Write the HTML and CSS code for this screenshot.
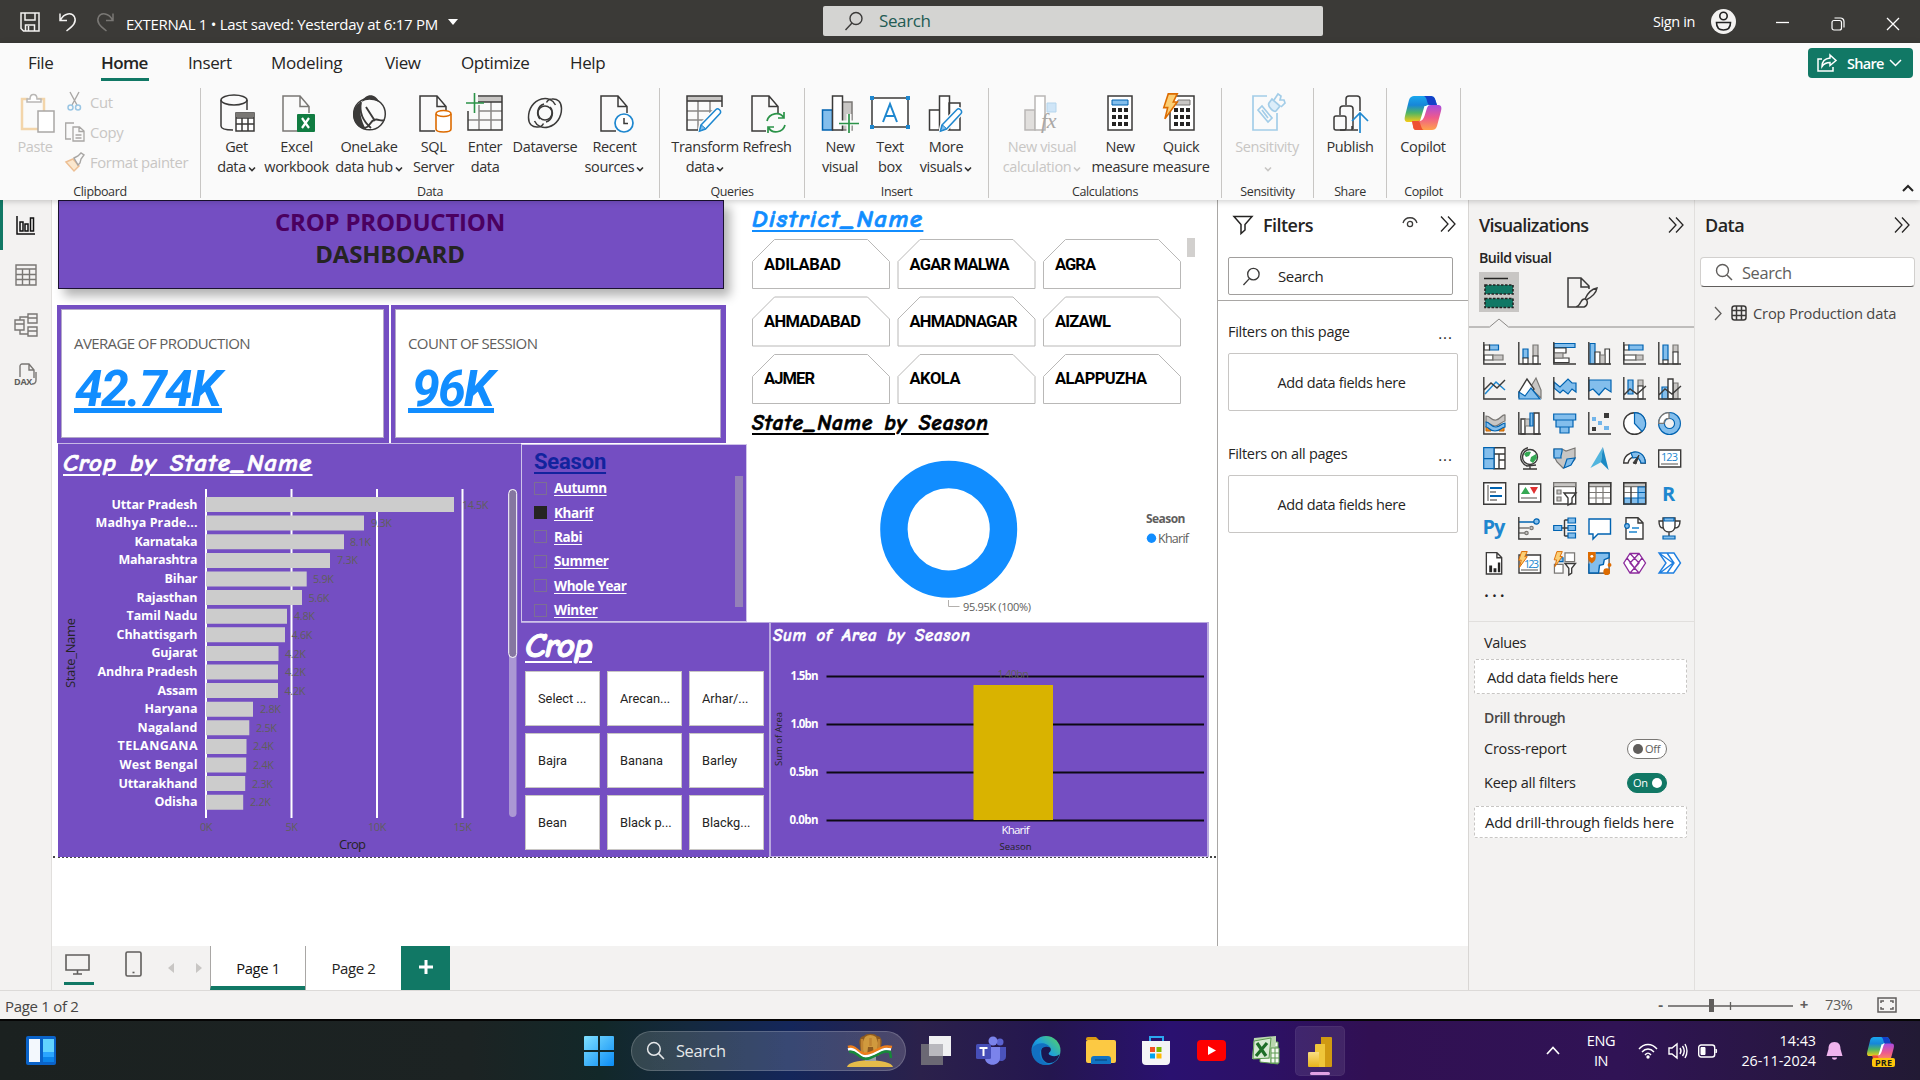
FILE: index.html
```html
<!DOCTYPE html>
<html lang="en">
<head>
<meta charset="utf-8">
<title>EXTERNAL 1 - Power BI Desktop</title>
<link rel="stylesheet" href="styles.css">
</head>
<body>
<svg class="defs" width="0" height="0" aria-hidden="true">
  <defs>
    <linearGradient id="cpA" x1="0" y1="0" x2="0" y2="1"><stop offset="0" stop-color="#1aa7ee"/><stop offset=".35" stop-color="#1786d8"/><stop offset=".65" stop-color="#4fb564"/><stop offset="1" stop-color="#f7cb15"/></linearGradient>
    <linearGradient id="cpB" x1="0" y1="0" x2="0" y2="1"><stop offset="0" stop-color="#a84be0"/><stop offset=".5" stop-color="#ee5a8c"/><stop offset="1" stop-color="#ffa24a"/></linearGradient>
    <linearGradient id="edge" x1="0" y1="1" x2="1" y2="0"><stop offset="0" stop-color="#0c59a4"/><stop offset=".5" stop-color="#1b9de2"/><stop offset="1" stop-color="#5bd75b"/></linearGradient>
    <linearGradient id="win" x1="0" y1="0" x2="1" y2="1"><stop offset="0" stop-color="#7fe0ff"/><stop offset="1" stop-color="#0a8cf5"/></linearGradient>
    <linearGradient id="gold" x1="0" y1="0" x2="0" y2="1"><stop offset="0" stop-color="#f9de83"/><stop offset="1" stop-color="#e8b41a"/></linearGradient>
    <symbol id="copilot" viewBox="0 0 38 34">
      <path d="M10 0h16c4 0 5 2 6 6l1 3h-6c-3 0-4 2-5 5l-3 9c-1 2-3 3-5 3H4c-3 0-4-2-3-6L5 4c1-3 3-4 5-4z" fill="url(#cpA)"/>
      <path d="M20 0h6c4 0 5 2 6 6l1 3h-6c-3 0-3-1-4-4-.6-3-1.500-4-3-5z" fill="#1340c8"/>
      <path d="M28 34H12c-2 0-3-2-3-4l-1-5h5c3 0 5-1 6-4l3-9c1-2 3-3 5-3h7c3 0 4 2 3 6l-4 15c-1 3-3 4-5 4z" fill="url(#cpB)"/>
      <path d="M8 25h5c3 0 3 2 4 5 .6 2 1.500 4 3 4h-8c-2 0-3-2-3-4z" fill="#ee5132"/>
      <path d="M22 10h-1.500l-4.500 15h-1c3 0 4.500-2 5.500-5l2.500-8c.4-1 1-2 2-3-1.500 0-2.500 0-3 1z" fill="#fff"/>
    </symbol>
    <symbol id="dbl" viewBox="0 0 16 16"><path d="M1 .5 8 8l-7 7.500M8 .5 15 8l-7 7.500" fill="none" stroke="#252423" stroke-width="1.300"/></symbol>
    <symbol id="dn" viewBox="0 0 8 6"><path d="m1 1.500 3 3 3-3" fill="none" stroke="currentColor" stroke-width="1.600"/></symbol>
    <symbol id="lens" viewBox="0 0 20 20"><circle cx="12" cy="7.500" r="6" fill="none" stroke="currentColor" stroke-width="1.400"/><path d="M8 12 1.500 19" fill="none" stroke="currentColor" stroke-width="1.400"/></symbol>
    <symbol id="lens2" viewBox="0 0 18 18"><circle cx="7.500" cy="7.500" r="6" fill="none" stroke="currentColor" stroke-width="1.400"/><path d="m12 12 5 5" fill="none" stroke="currentColor" stroke-width="1.500"/></symbol>
    <symbol id="pencil" viewBox="0 0 26 26"><path d="M3 18 18 2.500c2-2 6 1.500 4 4L7.500 22 1.500 24z" fill="#fff" stroke="#fafafa" stroke-width="4"/><path d="M3 18 18 2.500c2-2 6 1.500 4 4L7.500 22 1.500 24z" fill="#fff" stroke="#1e87cf" stroke-width="1.500"/><path d="m3.500 18 4 3.500-6 2.500z" fill="#83beec" stroke="#1e87cf"/></symbol>
    <symbol id="bolt" viewBox="0 0 14 24"><path d="M5 .8h8L9.500 8H13L2 23l2.500-10H1z" fill="#fbcf75" stroke="#dd6b00" stroke-width="1.400"/></symbol>
    <symbol id="sheet" viewBox="0 0 28 38"><path d="M27 18v-6.500L18 1H1v35h15M18 1v10.500h9" fill="none" stroke="currentColor" stroke-width="1.500"/></symbol>
  </defs>
</svg>

<header class="titlebar">
  <div class="tb-left">
    <svg width="20" height="20" viewBox="0 0 20 20" class="ln light"><path d="M1 1h18v18H3.500L1 16.500zM5 1v7h10V1M5.500 19v-6h9v6M8.500 14v5"/></svg>
    <svg width="18" height="20" viewBox="0 0 18 20" class="ln light"><path d="M1 1.500v7h7M1.500 8C5 1 13 0 15.500 5s-1.500 9-8 14"/></svg>
    <svg width="18" height="20" viewBox="0 0 18 20" class="ln faded"><path d="M17 1.500v7h-7M16.500 8C13 1 5 0 2.500 5s1.500 9 8 14"/></svg>
    <span class="doc">EXTERNAL 1 • Last saved: Yesterday at 6:17 PM</span>
    <svg width="10" height="6" viewBox="0 0 10 6"><path d="M0 0h10L5 6z" fill="#fff"/></svg>
  </div>
  <div class="tb-search"><svg width="20" height="20" class="dark"><use href="#lens"/></svg><span>Search</span></div>
  <div class="tb-right">
    <span class="signin">Sign in</span>
    <svg class="avatar" width="25" height="25" viewBox="0 0 25 25"><circle cx="12.500" cy="12.500" r="12.500" fill="#f3f2f1"/><circle cx="12.500" cy="7" r="3.700" fill="none" stroke="#222" stroke-width="1.600"/><path d="M5.500 13.500h14c0 4.500-2.500 7.500-7 7.500s-7-3-7-7.500z" fill="none" stroke="#222" stroke-width="1.600"/></svg>
    <svg class="wb" width="14" height="14" viewBox="0 0 14 14"><path d="M0 5.500h13" stroke="#fff" stroke-width="1.300"/></svg>
    <svg class="wb" width="14" height="14" viewBox="0 0 14 14" fill="none" stroke="#fff" stroke-width="1.200"><rect x="1" y="3.500" width="9.500" height="9.500" rx="2"/><path d="M3.500 1h6a3.500 3.500 0 0 1 3.500 3.500v6"/></svg>
    <svg class="wb" width="14" height="14" viewBox="0 0 14 14"><path d="m1 1 12 12M13 1 1 13" stroke="#fff" stroke-width="1.300"/></svg>
  </div>
</header>

<section class="ribbon">
  <nav class="tabs">
    <a class="t-file">File</a><a class="t-home on">Home</a><a class="t-ins">Insert</a><a class="t-mod">Modeling</a><a class="t-view">View</a><a class="t-opt">Optimize</a><a class="t-help">Help</a>
    <button class="share"><svg width="20" height="18" viewBox="0 0 20 18" fill="none" stroke="#fff" stroke-width="1.500"><path d="M5 5H1v12h15v-4M13 1l6 5.500-6 5V8.500c-4 0-6 1-8 4 0-5 3-8 8-8.500z"/></svg><span>Share</span><svg width="13" height="8" viewBox="0 0 13 8"><path d="m1 1 5.500 5.500L12 1" fill="none" stroke="#fff" stroke-width="1.500"/></svg></button>
  </nav>
  <div class="groups">
    <div class="grp g-clip">
      <div class="row">
        <div class="btn off b-paste"><svg width="36" height="40" viewBox="0 0 36 40"><path d="M8 6H2v30h16M24 18V6h-6" fill="none" stroke="#f3d5aa" stroke-width="2.500"/><path d="M7 9V6h3c0-6 7-6 7 0h4v3z" fill="#fff" stroke="#b9b7b5" stroke-width="1.500"/><rect x="18" y="18" width="16" height="21" fill="#fff" stroke="#a9a7a5" stroke-width="1.500"/></svg><span>Paste</span></div>
        <div class="clip">
          <div><svg width="20" height="20" viewBox="0 0 20 20" fill="none"><path d="M5 0l7 13M14 0 7 13" stroke="#a9a7a5" stroke-width="1.400"/><circle cx="5.500" cy="15.500" r="2.500" stroke="#9ac6e4" stroke-width="1.500"/><circle cx="13" cy="15.500" r="2.500" stroke="#9ac6e4" stroke-width="1.500"/></svg>Cut</div>
          <div><svg width="20" height="20" viewBox="0 0 20 20" fill="none" stroke="#a9a7a5" stroke-width="1.300"><path d="M6 17H.7V1H9M8 5h6.500L19 9v10H8zM14 5v4.500h5M10.500 13h6M10.500 16h6"/></svg>Copy</div>
          <div><svg width="20" height="20" viewBox="0 0 20 20" fill="none"><path d="m1 10 7-3 6 7-5 5z" fill="#fbe8cf" stroke="#edbf94" stroke-width="1.500"/><path d="m9 6 4-2 3-3 3 2-3 4-1 4-2 2z" stroke="#a9a7a5" stroke-width="1.400"/></svg>Format painter</div>
        </div>
      </div>
      <label>Clipboard</label>
    </div>
    <div class="grp g-data">
      <div class="row">
        <div class="btn w55"><svg width="36" height="40" viewBox="0 0 36 40"><g class="ln"><ellipse cx="15" cy="7" rx="13" ry="5"/><path d="M2 7v26c0 3 5 4 12 4M28 7v10"/><path d="M17 20h18v18H17zM17 25h18M17 31h18M23 25v13M29 25v13" fill="#fff"/></g><path d="M17 20h18v4H17z" fill="#797774"/></svg><span>Get</span><span>data<svg class="dn"><use href="#dn"/></svg></span></div>
        <div class="btn w65"><svg width="36" height="40" viewBox="0 0 36 40"><svg x="3" y="2" width="28" height="38" class="gray"><use href="#sheet"/></svg><rect x="18" y="21" width="18" height="18" rx="1" fill="#107c41"/><path d="m23 25 7 10M30 25l-7 10" stroke="#fff" stroke-width="2.200"/></svg><span>Excel</span><span>workbook</span></div>
        <div class="btn w80"><svg width="36" height="40" viewBox="0 0 36 40"><g class="ln"><circle cx="18.500" cy="21" r="15.800"/><path d="M10 9c-2 10 2 19 10 26M15 14l9 14M33 27c-3 2-6-2-10 0-4 1-3 6-9 8" stroke-width="1.900"/></g><path d="M10 9C1 14-1 27 8 34c2 1 4 2 7 2-5-8-7-18-5-27zM11 9c3-9 14-9 17 0-7-3-13-3-17 0z" fill="#3b3a39"/></svg><span>OneLake</span><span>data hub<svg class="dn"><use href="#dn"/></svg></span></div>
        <div class="btn w49"><svg width="36" height="40" viewBox="0 0 36 40"><svg x="3" y="2" width="28" height="38"><use href="#sheet"/></svg><g fill="#fff" stroke="#dd6b00" stroke-width="1.600"><path d="M20 21v15c0 4 15 4 15 0V21"/><ellipse cx="27.500" cy="20.500" rx="7.500" ry="3"/></g></svg><span>SQL</span><span>Server</span></div>
        <div class="btn w54"><svg width="38" height="40" viewBox="0 0 38 40"><path d="M12 4h24v5H12z" fill="#c8c6c4"/><g class="ln"><path d="M13 18h23M2 27h34M13 12v25M25 9v28" stroke="#8a8886"/><path d="M12 3h24v34H2V18M12 9h24"/></g><path d="M8.500 0v20M0 10h18" stroke="#2b9348" stroke-width="1.600"/></svg><span>Enter</span><span>data</span></div>
        <div class="btn w66"><svg width="38" height="40" viewBox="0 0 38 40" class="ln"><path id="swirl" d="M29.500 12C27 6.500 21 4.500 15.500 6 7 8.500 2.500 16 2.500 24.500c0 7 4 10 9.500 9.500 2.500 0 4.500-1.500 5.500-3.500"/><use href="#swirl" transform="rotate(180 19 20)"/><circle cx="19" cy="20" r="7"/><path d="M14 26c-4-4-3-13 4-15M24 14c4 4 3 13-4 15"/></svg><span>Dataverse</span></div>
        <div class="btn w73"><svg width="36" height="40" viewBox="0 0 36 40"><svg x="3" y="2" width="28" height="38"><use href="#sheet"/></svg><circle cx="27" cy="30" r="9" fill="#fff" stroke="#1e87cf" stroke-width="1.700"/><path d="M27 25v5.500h4" class="ln"/></svg><span>Recent</span><span>sources<svg class="dn"><use href="#dn"/></svg></span></div>
      </div>
      <label>Data</label>
    </div>
    <div class="grp g-query">
      <div class="row">
        <div class="btn w66"><svg width="40" height="40" viewBox="0 0 40 40"><path d="M2 3h35v5H2z" fill="#c8c6c4"/><g class="ln"><path d="M2 18h26M2 27h18M13 8v29M25 8v12" stroke="#8a8886"/><path d="M37 14V3H2v34h12M2 8h35"/></g><use href="#pencil" x="13" y="14" width="26" height="26"/></svg><span>Transform</span><span>data<svg class="dn"><use href="#dn"/></svg></span></div>
        <div class="btn w58"><svg width="36" height="40" viewBox="0 0 36 40"><svg x="2" y="2" width="28" height="38"><use href="#sheet"/></svg><path d="M17 20h20v20H17z" fill="#fafafa"/><g fill="none" stroke="#2b9348" stroke-width="1.700"><path d="M18 28c2-8 13-10 17-3M35 19v6h-6M36 32c-2 8-13 9-16 3M19 40v-6h6"/></g></svg><span>Refresh</span></div>
      </div>
      <label>Queries</label>
    </div>
    <div class="grp g-ins">
      <div class="row">
        <div class="btn w50"><svg width="38" height="40" viewBox="0 0 38 40"><path d="M21 9h10v28H21z" fill="#c8c6c4" stroke="#797774" stroke-width="1.500"/><path d="M1.500 17h10v20h-10z" fill="#83beec" stroke="#0063b1" stroke-width="1.500"/><path d="M11.500 3h10v34h-10z" fill="#fff" class="lnk"/><path d="M28 21v19M18 30h20" stroke="#fafafa" stroke-width="5"/><path d="M28 21v19M18 30.500h20" stroke="#2b9348" stroke-width="1.700"/></svg><span>New</span><span>visual</span></div>
        <div class="btn w50"><svg width="40" height="40" viewBox="0 0 40 40"><rect x="2" y="5" width="36" height="29" fill="#fff" class="lnk"/><path d="M0 3h4v4H0zM36 3h4v4h-4zM0 32h4v4H0zM36 32h4v4h-4z" fill="#1e87cf"/><path d="m13 29 7-18 7 18M15.500 23h9" fill="none" stroke="#1e87cf" stroke-width="2"/></svg><span>Text</span><span>box</span></div>
        <div class="btn w62"><svg width="38" height="40" viewBox="0 0 38 40"><g class="lnk" fill="#fff"><path d="M22 10h11v27H22zM2.500 17h10v20h-10zM12.500 3h10v34h-10z"/></g><use href="#pencil" x="12" y="14" width="26" height="26"/></svg><span>More</span><span>visuals<svg class="dn"><use href="#dn"/></svg></span></div>
      </div>
      <label>Insert</label>
    </div>
    <div class="grp g-calc">
      <div class="row">
        <div class="btn off w84"><svg width="38" height="40" viewBox="0 0 38 40"><path d="M24 10h9v9h-9z" fill="#cfe5f7" stroke="#b5d5ec"/><path d="M2 17h10v20H2z" fill="#e1dfdd" stroke="#b9b7b5" stroke-width="1.500"/><path d="M12 3h10v34H12z" fill="#fff" stroke="#b9b7b5" stroke-width="1.500"/><text x="18" y="35" class="fx">fx</text></svg><span>New visual</span><span>calculation<svg class="dn"><use href="#dn"/></svg></span></div>
        <div class="btn w72"><svg width="28" height="40" viewBox="0 0 28 40"><rect x="2" y="3" width="24" height="34" fill="#fff" class="lnk"/><path d="M6 7h16v5H6z" fill="#83beec" stroke="#0063b1"/><path d="M6 17h16M6 24h16M6 31h16" stroke="#252423" stroke-width="4" stroke-dasharray="4 2"/></svg><span>New</span><span>measure</span></div>
        <div class="btn w50"><svg width="34" height="40" viewBox="0 0 34 40"><rect x="6" y="3" width="24" height="34" fill="#fff" class="lnk"/><path d="M14 7h12v5H12z" fill="#c8c6c4" stroke="#797774"/><path d="M10 17h16M10 24h16M10 31h16" stroke="#252423" stroke-width="4" stroke-dasharray="4 2"/><use href="#bolt" x="-2" y="0" width="17" height="27"/></svg><span>Quick</span><span>measure</span></div>
      </div>
      <label>Calculations</label>
    </div>
    <div class="grp g-sens">
      <div class="row"><div class="btn off w80"><svg width="36" height="40" viewBox="0 0 36 40" fill="none" stroke="#a3cde8" stroke-width="1.700"><path d="M18 3H4v34h24V20"/><path d="m20 10 3-4 8 7-4 5c-2 2-9-5-7-8z" fill="#dceefa"/><path d="m25 7 4-6 3 2-1 4 4 0 1 3-4 4M9 17l4-4 10 12-4 4zM13 17l6 8"/></svg><span>Sensitivity</span><span><svg class="dn"><use href="#dn"/></svg></span></div></div>
      <label>Sensitivity</label>
    </div>
    <div class="grp g-share">
      <div class="row"><div class="btn w70"><svg width="36" height="40" viewBox="0 0 36 40"><g class="ln"><rect x="2" y="23" width="12" height="14" rx="2"/><path d="M8 22v-6c0-2 1-3 3-3h7c2 0 3 1 3 3v20M14 12V6c0-2 1-3 3-3h8c2 0 3 1 3 3v12M8 37h18M20 33v4"/></g><path d="M28 40V21M20 28l8-8 8 8" fill="none" stroke="#1e87cf" stroke-width="1.700"/></svg><span>Publish</span></div></div>
      <label>Share</label>
    </div>
    <div class="grp g-cop">
      <div class="row"><div class="btn w70"><svg width="38" height="40" viewBox="0 0 38 40"><use href="#copilot" y="3" width="38" height="34"/></svg><span>Copilot</span></div></div>
      <label>Copilot</label>
    </div>
    <svg class="collapse" width="12" height="8" viewBox="0 0 12 8"><path d="m1 7 5-5 5 5" fill="none" stroke="#252423" stroke-width="2"/></svg>
  </div>
</section>

<main class="work">
  <aside class="rail">
    <div class="sel"><svg width="22" height="22" viewBox="0 0 22 22" fill="none" stroke="#111" stroke-width="1.500"><path d="M2 2v18h18M5 8h3v9H5zM10 10h3v7h-3zM15.500 4h3v13h-3z"/></svg></div>
    <div><svg width="22" height="22" viewBox="0 0 22 22" class="rl"><path d="M1 1h20v20H1zM1 5h20M1 10.500h20M1 15.500h20M7.500 5v16M14.500 5v16"/></svg></div>
    <div><svg width="24" height="24" viewBox="0 0 24 24" class="rl"><path d="M1 7h9v10H1zM1 11h9M14 1h9v9h-9zM14 5h9M14 14h9v9h-9zM14 18h9M6 7V4h8M6 17v4h8"/></svg></div>
    <div><svg width="24" height="24" viewBox="0 0 24 24" class="rl"><path d="M6 14V3c0-1 1-2 2-2h7l5 6v8M15 1v6h5M22 9v8c0 3-1 4-4 4"/><text x="0" y="22" class="dax" textLength="18">DAX</text></svg></div>
  </aside>

  <div class="center">
    <div class="canvas">
      <div class="report">
        <div class="v-title"><div class="banner"><div class="p">CROP PRODUCTION</div><div>DASHBOARD</div></div></div>
        <div class="v-cards">
          <div class="card"><div class="in"><span>AVERAGE OF PRODUCTION</span><b>42.74K</b></div></div>
          <div class="card"><div class="in"><span>COUNT OF SESSION</span><b class="two">96K</b></div></div>
        </div>
        <div class="v-bars">
          <h2>Crop by State_Name</h2>
          <svg width="463" height="379" viewBox="58 478 463 379">
            <path d="M206 489v329M291.500 489v329M377 489v329M462.500 489v329" stroke="#fff" stroke-width="2"/>
            <g fill="#ccc"><path d="M206 497h248v15h-248zM206 515.600h158v15h-158zM206 534.200h138v15h-138zM206 552.900h124v15h-124zM206 571.500h100.700v15h-100.700zM206 590.100h96v15h-96zM206 608.700h81v15h-81zM206 627.300h79v15h-79zM206 645.900h72.500v15h-72.500zM206 664.500h72v15h-72zM206 683.100h72v15h-72zM206 701.700h47v15h-47zM206 720.300h43.300v15h-43.300zM206 738.900h40.500v15h-40.500zM206 757.500h40.200v15h-40.200zM206 776.100h39.200v15h-39.200zM206 794.700h37.200v15h-37.200z"/></g>
            <g class="cat">
              <text x="197.500" y="508.500" textLength="86">Uttar Pradesh</text><text x="197.500" y="527" textLength="102">Madhya Prade...</text><text x="197.500" y="545.700" textLength="63">Karnataka</text><text x="197.500" y="564.300" textLength="79">Maharashtra</text><text x="197.500" y="582.900" textLength="33">Bihar</text><text x="197.500" y="601.500" textLength="61">Rajasthan</text><text x="197.500" y="620" textLength="71">Tamil Nadu</text><text x="197.500" y="638.700" textLength="81">Chhattisgarh</text><text x="197.500" y="657.300" textLength="46">Gujarat</text><text x="197.500" y="675.900" textLength="100">Andhra Pradesh</text><text x="197.500" y="694.500" textLength="40">Assam</text><text x="197.500" y="713" textLength="53">Haryana</text><text x="197.500" y="731.700" textLength="60">Nagaland</text><text x="197.500" y="750.300" textLength="80">TELANGANA</text><text x="197.500" y="768.900" textLength="78">West Bengal</text><text x="197.500" y="787.500" textLength="79">Uttarakhand</text><text x="197.500" y="806" textLength="43">Odisha</text>
            </g>
            <g class="val">
              <text x="462" y="508.500" textLength="26">14.5K</text><text x="371" y="527.300">9.3K</text><text x="350" y="545.700">8.1K</text><text x="337" y="564.300">7.3K</text><text x="313" y="583.400">5.9K</text><text x="308.500" y="601.500">5.6K</text><text x="294" y="620.300">4.8K</text><text x="291.500" y="638.700">4.6K</text><text x="285" y="657.500">4.2K</text><text x="285" y="676.400">4.2K</text><text x="284.500" y="694.500">4.2K</text><text x="260" y="713.300">2.8K</text><text x="256" y="731.700">2.5K</text><text x="253" y="750.300">2.4K</text><text x="253" y="769.400">2.4K</text><text x="252" y="787.500">2.3K</text><text x="250" y="806.300">2.2K</text>
            </g>
            <g class="val mid"><text x="206" y="831">0K</text><text x="291.500" y="831">5K</text><text x="377" y="831">10K</text><text x="462.500" y="831">15K</text></g>
            <text class="axt" x="352.500" y="849" textLength="27">Crop</text>
            <text class="axt" transform="translate(75 653) rotate(-90)" textLength="70">State_Name</text>
            <rect x="509" y="489" width="7.500" height="328" rx="3.700" fill="#ab97d4"/><rect x="508.700" y="489.500" width="8" height="168" rx="4" fill="#8576a0" stroke="#fff" stroke-width="1"/>
          </svg>
        </div>
        <div class="v-season">
          <div>
            <h3>Season</h3>
            <ul><li><i></i><u>Autumn</u></li><li><i class="ck"></i><u>Kharif</u></li><li><i></i><u>Rabi</u></li><li><i></i><u>Summer</u></li><li><i></i><u>Whole Year</u></li><li><i></i><u>Winter</u></li></ul>
          </div>
          <div class="sb"></div>
        </div>
        <div class="v-crop">
          <h2>Crop</h2>
          <div class="tiles"><div>Select ...</div><div>Arecan...</div><div>Arhar/...</div><div>Bajra</div><div>Banana</div><div>Barley</div><div>Bean</div><div>Black p...</div><div>Blackg...</div></div>
        </div>
        <div class="v-right">
          <h2 class="dist">District_Name</h2>
          <div class="slicer">
            <svg width="430" height="166" viewBox="0 0 430 166">
              <g fill="none" stroke="#b9b8b7"><path id="cut" d="M.5 49.500V22.500L22.500.5h93l22 22v27z"/><use href="#cut" x="145.500"/><use href="#cut" x="291"/><use href="#cut" y="57.500"/><use href="#cut" x="145.500" y="57.500"/><use href="#cut" x="291" y="57.500"/><use href="#cut" y="115"/><use href="#cut" x="145.500" y="115"/><use href="#cut" x="291" y="115"/></g>
              <g class="din"><text x="12" y="31" textLength="77">ADILABAD</text><text x="157.500" y="31" textLength="100">AGAR MALWA</text><text x="303" y="31" textLength="41">AGRA</text><text x="12" y="88" textLength="97">AHMADABAD</text><text x="157.500" y="88" textLength="108">AHMADNAGAR</text><text x="303" y="88" textLength="56">AIZAWL</text><text x="12" y="145" textLength="51">AJMER</text><text x="157.500" y="145" textLength="51">AKOLA</text><text x="303" y="145" textLength="92">ALAPPUZHA</text></g>
            </svg>
            <div class="sb"></div>
          </div>
          <h2 class="don">State_Name by Season</h2>
          <svg width="463" height="182" viewBox="752 440 463 182">
            <circle cx="948.700" cy="529.300" r="54.800" fill="none" stroke="#118dff" stroke-width="27.400"/>
            <path d="M948.500 600v6.500h11" fill="none" stroke="#b3b0ad"/>
            <g class="lg"><text x="963" y="611" class="pc" textLength="68">95.95K (100%)</text><text x="1146" y="523" textLength="39.500" class="bd">Season</text><text x="1158" y="543" textLength="31" class="kh">Kharif</text></g><circle cx="1151.500" cy="538.300" r="4.700" fill="#118dff"/>
          </svg>
        </div>
        <div class="v-area">
          <h4>Sum of Area by Season</h4>
          <svg width="436" height="206" viewBox="771 650 436 206">
            <path d="M826.500 676.500H1204M826.500 724.500H1204M826.500 772.500H1204M826.500 820.500H1204" stroke="#0d0914" stroke-width="2"/>
            <g class="val mid"><text x="1013" y="677.500" textLength="31">1.40bn</text></g>
            <path d="M973.500 685h79.500v135h-79.500z" fill="#d9b300"/>
            <g class="yl"><text x="818.500" y="680" textLength="28">1.5bn</text><text x="818.500" y="728" textLength="28">1.0bn</text><text x="818.500" y="776" textLength="29">0.5bn</text><text x="818.500" y="824" textLength="29">0.0bn</text></g>
            <text x="1015.500" y="834" class="xk" textLength="28">Kharif</text><text x="1015.500" y="849.500" class="xs" textLength="32">Season</text>
            <text class="xs" transform="translate(781.500 739) rotate(-90)" textLength="54">Sum of Area</text>
          </svg>
        </div>
      </div>
    </div>
    <aside class="filters">
      <div class="fh"><svg width="20" height="20" viewBox="0 0 20 20"><path d="M1 1.500h18l-7 8V15l-4 3.500v-9z" fill="none" stroke="#252423" stroke-width="1.500"/></svg><b>Filters</b><svg width="16" height="14" viewBox="0 0 16 14" class="ln eye"><path d="M1 6c2-7 12-7 14 0" stroke-width="1.300"/><circle cx="8" cy="7" r="2.600" stroke-width="1.300"/></svg><svg class="up" width="16" height="16"><use href="#dbl"/></svg></div>
      <div class="fs"><svg width="19" height="19" class="dark"><use href="#lens"/></svg><span>Search</span></div>
      <div class="fsec"><div class="fl"><span>Filters on this page</span><em>...</em></div><div class="fbox">Add data fields here</div></div>
      <div class="fsec two"><div class="fl"><span>Filters on all pages</span><em>...</em></div><div class="fbox">Add data fields here</div></div>
    </aside>
    <div class="pages">
      <div class="dev on"><svg width="25" height="21" viewBox="0 0 25 21" fill="none" stroke="#605e5c" stroke-width="1.600"><path d="M1 1h23v15H1zM12.500 16v4M8 20h9"/></svg></div>
      <div class="mob"><svg width="17" height="26" viewBox="0 0 17 26" fill="none" stroke="#605e5c" stroke-width="1.600"><rect x="1" y="1" width="15" height="24" rx="1.500"/><path d="M7.500 21.500h2"/></svg></div>
      <div class="arr"><svg width="6" height="10"><path d="M6 0v10L0 5z" fill="#c8c6c4"/></svg><svg width="6" height="10"><path d="M0 0v10l6-5z" fill="#c8c6c4"/></svg></div>
      <div class="pg on">Page 1</div><div class="pg">Page 2</div>
      <div class="plus"><svg width="14" height="14" viewBox="0 0 14 14"><path d="M7 0v14M0 7h14" stroke="#fff" stroke-width="3"/></svg></div>
    </div>
  </div>

  <aside class="viz">
    <div class="ph"><b class="vh">Visualizations</b><svg width="16" height="16"><use href="#dbl"/></svg></div>
    <div class="bv">Build visual</div>
    <div class="modes">
      <div class="m1"><svg width="30" height="32" viewBox="0 0 30 32"><path d="M0 1.500h24" stroke="#252423" stroke-width="1.500"/><path d="M1 8h28v9H1zM1 21.500h28v9H1z" fill="#117865" stroke="#252423" stroke-width="1.600" stroke-dasharray="2.500 1.500"/></svg></div>
      <svg width="31" height="31" viewBox="0 0 31 31" class="ln"><path d="M6 30H1V1h13l8 8v3M14 1v9h8M6 30h8c7 1 8-7 4-8-5-1-3 6-9 8M18 22c3-7 7-10 12-11-1 6-5 9-11 12"/></svg>
    </div>
    <svg class="notch" width="225" height="10" viewBox="0 0 225 10"><path d="M0 9h20.500l9.500-8 9.500 8H225" fill="none" stroke="#8a8886"/></svg>
    <div class="vg">
      <svg viewBox="0 0 23 23"><path class="b" d="M6.500 3h9v5h-9z"/><path class="w" d="M1 3h5.500v5H1zM1 13h9v5H1z"/><path class="g" d="M10 13h10v5H10z"/><path class="k" d="M.8 0v22H23"/></svg>
      <svg viewBox="0 0 23 23"><path class="b" d="M5 7h5v9H5z"/><path class="g" d="M15 3h5v11h-5z"/><path class="w" d="M5 16h5v6H5zM15 14h5v8h-5z"/><path class="k" d="M.8 0v22H23"/></svg>
      <svg viewBox="0 0 23 23"><path class="b" d="M1 1.500h21v4H1z"/><path class="w" d="M1 6h12v5H1zM1 16h15v4.500H1z"/><path class="g" d="M1 11h9v5H1z"/><path class="k" d="M.8 0v22H23"/></svg>
      <svg viewBox="0 0 23 23"><path class="b" d="M2 1.500h5V22H2z"/><path class="w" d="M7 10h5v12H7zM17 7h4.500v15H17z"/><path class="g" d="M12 13h5v9h-5z"/><path class="k" d="M.8 0v22H23"/></svg>
      <svg viewBox="0 0 23 23"><path class="w" d="M1 3h5v5H1zM1 13h12v5H1z"/><path class="b" d="M6 3h14v5H6z"/><path class="g" d="M13 13h7v5h-7z"/><path class="k" d="M.8 0v22H23"/></svg>
      <svg viewBox="0 0 23 23"><path class="b" d="M5 3h5v15H5z"/><path class="g" d="M15 3h5v7h-5z"/><path class="w" d="M5 18h5v4H5zM15 10h5v12h-5z"/><path class="k" d="M.8 0v22H23"/></svg>

      <svg viewBox="0 0 23 23"><path d="m2 17 11-12 9 8" fill="none" stroke="#1e87cf" stroke-width="1.500"/><path class="k" d="m1 13 7-7 6 5 8-8M.8 0v22H23"/></svg>
      <svg viewBox="0 0 23 23"><path class="g" d="m12 11 6-10 5 12v8z"/><path class="w k2" d="M1 15 9 2l7 10-4 8H1z"/><path class="b" d="M1 22v-7l6 4 6-8 9 11z"/></svg>
      <svg viewBox="0 0 23 23"><path class="b" d="m1 5 6 5 8-8 4 4h4v9l-4-3-4 5-5-4-3 3-6-5z"/><path class="k" d="M.8 0v22H23"/></svg>
      <svg viewBox="0 0 23 23"><path class="b" d="M1 3h22v12l-6-4-6 7-6-6-4 2z"/><path class="k" d="M.8 0v22H23"/></svg>
      <svg viewBox="0 0 23 23"><path class="b" d="M5 3h5v14H5z"/><path class="g" d="M15 3h5v6h-5z"/><path class="w" d="M15 9h5v13h-5z"/><path class="k" d="m1 18 6-6 7 5 9-8M.8 0v22H23"/></svg>
      <svg viewBox="0 0 23 23"><path class="b" d="M4 10h6v12H4z"/><path class="g" d="M15 6h5v16h-5z"/><path class="w k2" d="M10 2h5v20h-5z"/><path class="k" d="m1 18 6-6 7 5 9-8M.8 0v22H23"/></svg>

      <svg viewBox="0 0 23 23"><path d="M3 14h5v5H3zM16 14h5v5h-5z" fill="#ef8a1d" stroke="#c66400"/><path class="g" d="M3 4c5 0 5 5 10 4s6-6 9-5v6c-4 1-6 5-10 5S5 10 3 10z"/><path class="b" d="M3 10c4 0 4 5 10 5 4 0 6-4 9-4v4c-5 1-4 4-10 4s-6-4-9-4z"/><path class="k" d="M.8 0v22H23"/></svg>
      <svg viewBox="0 0 23 23"><path class="w k2" d="M3 7h4v15H3zM16 1h5v21h-5z"/><path class="g" d="M7 7h5v7H7z"/><path class="b" d="M12 1h3v13h-3z"/><path class="k" d="M.8 0v22H23"/></svg>
      <svg viewBox="0 0 23 23"><path class="b" d="M.7 2h22v6H.700zM3 8h17v7H3zM7 15h9v6H7z"/></svg>
      <svg viewBox="0 0 23 23"><path d="M16 1h5v5h-5zM4 15h4v4H4z" fill="#3b3a39"/><path d="M4 5h4v4H4zM10 9h4v4h-4zM16 14h5v4h-5z" fill="#72b5ea"/><path class="k" d="M.8 0v22H23"/></svg>
      <svg viewBox="0 0 23 23"><circle class="w k2" cx="11.500" cy="11.500" r="10.800"/><path class="b" d="M11.500.7v10.800l7.500 8A10.800 10.800 0 0 0 11.500.7z"/></svg>
      <svg viewBox="0 0 23 23"><circle cx="11.500" cy="11.500" r="8" fill="none" stroke="#0063b1" stroke-width="7"/><circle cx="11.500" cy="11.500" r="8" fill="none" stroke="#83beec" stroke-width="4.800"/><path class="w g2" d="M11 .7v5.600c-3 0-5 2-5 5H.7C.7 5 5 .7 11 .7z"/></svg>

      <svg viewBox="0 0 23 23"><path class="w k2" d="M11 .7h11v21H11zM11 7h11M16 7v15M16 13h6"/><path class="b" d="M.7.7H11v11H.7zM.7 11.700H11v10H.7z"/></svg>
      <svg viewBox="0 0 23 23"><circle class="w k2" cx="12" cy="10" r="7.500"/><path d="M6 7c2-3 6-3 7-2l-2 4-3 1zM13 10l5-3 1 4-4 5-3-2z" fill="#34a853"/><path class="k" d="M10 .8C1 3 0 15 9 19l9-1M12 18v4M5 22h14"/></svg>
      <svg viewBox="0 0 23 23"><path class="g" d="M1 2h8l4 2 9-3v11l-5 6-7 3-6-6-3-6z"/><path class="b" d="M1 2h8c1 4-2 6-1 9H1zM14 12l8-1-4 7-7 3z"/></svg>
      <svg viewBox="0 0 23 24"><path d="M15 0 2 22l11-6z" fill="#51b5de"/><path d="m15 0-2 16 8 8z" fill="#1c8ac4"/></svg>
      <svg viewBox="0 0 23 23"><path class="w k2" d="M.7 16C1 2 22 2 22.300 16H18c-1-8-11-8-13 0z"/><path class="b" d="M8 6c7-3 14 1 14.300 10H18c-1-4-4-6-8-5z"/><path d="m10 16 6-8-3 9z" fill="#3b3a39" stroke="#3b3a39"/></svg>
      <svg viewBox="0 0 23 23"><path class="w k2" d="M.7 3h22v17H.700z"/><path d="M3 17h17" class="g2" fill="none"/><text x="3" y="14" class="vt" textLength="17">123</text></svg>

      <svg viewBox="0 0 23 23"><path class="w k2" d="M.7.7h22v21.500H.700z"/><path d="M5 3v16M7 10h6M7 18h7" class="g2" fill="none"/><path d="M7 6h12M7 14h12" stroke="#0063b1" stroke-width="1.800"/></svg>
      <svg viewBox="0 0 23 23"><path class="w k2" d="M.7 2h22v18H.700z"/><path d="m3 12 4.500-7L12 12z" fill="#34a853"/><path d="m12 5 4 7 4-7z" fill="#e03030"/><path d="M3 16h16" class="g2"/></svg>
      <svg viewBox="0 0 23 23"><path class="w k2" d="M.7.7h22V22H.700z"/><path class="g" d="M.7.7h22v4H.700zM4 8h4v4H4zM4 15h4v4H4z"/><path class="w k2" d="M11 11h12l-4 5v5l-4 2v-7z"/></svg>
      <svg viewBox="0 0 23 23"><path class="w" d="M.7.7h22V22H.700z"/><path class="g" d="M.7.7h22v4H.700zM.7 10.500h22M.7 16h22M8 5v17M15 5v17"/><path class="k" d="M.7.7h22V22H.700z"/></svg>
      <svg viewBox="0 0 23 23"><path class="w" d="M.7.7h22V22H.700z"/><path class="g" d="M.7.7h22v4H.700zM.7 10.500h22"/><path class="b" d="M15 5h7.500v5.500H15zM15 10.500h7.500V16H15zM1 16h7v6H1zM8 16h7v6H8zM15 16h7.500v6H15z"/><path class="k" d="M.7.7h22V22H.700zM8 5v17"/></svg>
      <svg viewBox="0 0 23 23"><text x="4" y="19" class="big">R</text></svg>

      <svg viewBox="0 0 23 23"><text x="-.5" y="17" class="big" textLength="23">Py</text></svg>
      <svg viewBox="0 0 23 23"><path d="M1 5h15" stroke="#0063b1" stroke-width="1.500"/><circle class="b" cx="18.500" cy="4.500" r="2.700"/><path class="g2" d="M1 11h10M1 16h6"/><circle class="g" cx="13.500" cy="11" r="1.700"/><circle class="g" cx="8.500" cy="16" r="1.700"/><path class="k" d="M.8 0v22H23"/></svg>
      <svg viewBox="0 0 23 23"><path class="k" d="M8 11h7M11.500 3v16M11.500 3h4M11.500 19h4"/><path class="b" d="M.7 8.500h8v5h-8zM15 1h7.500v5H15zM15 8.500h7.500v5H15zM15 16h7.500v5H15z"/></svg>
      <svg viewBox="0 0 23 23"><path d="M1 2h21.500v15H10l-5 5v-5H1z" fill="#fff" stroke="#0063b1" stroke-width="1.400"/></svg>
      <svg viewBox="0 0 23 23"><path class="w k2" d="M3 .7h12l5 5V22H3zM15 .7V6h5"/><circle cx="4" cy="9" r="2.300" class="b"/><path d="M9 11h7M6 15h8" stroke="#1e87cf" stroke-width="1.300"/></svg>
      <svg viewBox="0 0 23 23"><path class="w k2" d="M5 1h12v8c0 8-12 8-12 0zM5 4H1c0 5 2 7 4 7M17 4h5c0 5-2 7-5 7M11 15v4"/><path class="b" d="M6 1h10v3H6zM5 19h12v3H5z"/></svg>

      <svg viewBox="0 0 23 24"><path class="w k2" d="M3 .7h11l5 5V23H3zM14 .7V6h5"/><path d="M6 14h3v7H6zM10.500 17h3v4h-3zM15 11h2.500v10H15z" fill="#252423"/></svg>
      <svg viewBox="0 0 23 23"><path class="w k2" d="M1 3h21.500v18H1z"/><path d="M3 18h17" class="g2"/><text x="6" y="15.500" class="vt" textLength="15">123</text><use href="#bolt" x="-1" y="-1" width="12" height="17"/></svg>
      <svg viewBox="0 0 23 24"><path class="w g2" d="M12 1h10v9H12zM1 13h9v9H1z"/><path class="b" d="M6 6h4v4H6z"/><path class="w k2" d="M12 12h11l-4 5v5l-3 2v-7z"/><use href="#bolt" x="-1" y="-1" width="12" height="17"/></svg>
      <svg viewBox="0 0 24 24"><path class="w" d="M1 1h21v21H1z"/><path d="M8 1h14v5l-5 2-1 5-4 1-1 8H1V12" fill="#83beec" stroke="#0063b1" stroke-width="1.500"/><path d="M0 0h8v6c0 3-2 4-4 6-2-2-4-3-4-6z" fill="#dd6b00"/><circle cx="4" cy="4.500" r="1.500" fill="#fff"/><circle cx="19.500" cy="20.500" r="3.500" fill="#dd6b00"/><circle cx="22.500" cy="13.500" r="2" fill="#dd6b00"/></svg>
      <svg viewBox="0 0 23 23" fill="#fff" stroke="#8c2a9c" stroke-width="1.300"><path d="M7 1.500h9l6.500 9.500-6.500 10H7L.8 11zM7 1.500l9 9.500-9 10M16 1.500 7 11l9 10M4 6l7.500 10M19 6l-7.500 10"/></svg>
      <svg viewBox="0 0 23 23" fill="#fff" stroke="#1e7fe0" stroke-width="1.400"><path d="M1 1h15l6.500 10-7 10H1l7-10zM1 1l14 10M9 1l7 10-7 10M15 11 2 21"/></svg>
    </div>
    <div class="more">...</div>
    <div class="wells">
      <div class="wl">Values</div>
      <div class="wb1">Add data fields here</div>
      <div class="wl dt">Drill through</div>
      <div class="tg"><span>Cross-report</span><div class="sw"><i></i>Off</div></div>
      <div class="tg"><span>Keep all filters</span><div class="sw on">On<i></i></div></div>
      <div class="wb2">Add drill-through fields here</div>
    </div>
  </aside>
  <aside class="data">
    <div class="ph"><b>Data</b><svg width="16" height="16"><use href="#dbl"/></svg></div>
    <div class="ds"><svg width="18" height="18"><use href="#lens2"/></svg><span>Search</span></div>
    <div class="dr"><svg width="8" height="15" viewBox="0 0 8 15"><path d="m1 1 6 6.500L1 14" fill="none" stroke="#605e5c" stroke-width="1.300"/></svg><svg width="16" height="16" viewBox="0 0 16 16" class="ln"><rect x="1" y="1" width="14" height="14" rx="2.500"/><path d="M1 5.500h14M1 10.500h14M5.500 1v14M10.500 1v14"/></svg><span>Crop Production data</span></div>
  </aside>
</main>

<footer class="status">
  <span class="pgn">Page 1 of 2</span>
  <div class="zoom"><span>-</span><svg width="126" height="14" viewBox="0 0 126 14"><path d="M0 7h125M62.500 3v8" stroke="#605e5c" stroke-width="1.300"/><path d="M41 0h5v13h-5z" fill="#605e5c"/></svg><span>+</span><em>73%</em><svg width="20" height="16" viewBox="0 0 20 16" fill="none" stroke="#605e5c" stroke-width="1.500"><path d="M1 1h18v14H1zM4 6V4h3M13 4h3v2M16 10v2h-3M7 12H4v-2"/></svg></div>
</footer>

<div class="taskbar">
  <svg class="k1" width="30" height="29" viewBox="0 0 30 29"><rect width="30" height="29" rx="2" fill="#0a63c9"/><path d="M3 3h11v23H3z" fill="#f3f8fd"/><path d="M17 3h11v13H17z" fill="#62d3ff"/><path d="M17 16h11v5H17z" fill="#2aa5ff"/><path d="M17 21h11v5H17z" fill="#0b84ea"/></svg>
  <svg class="k2w" width="30" height="30" viewBox="0 0 30 30" fill="url(#win)"><path d="M0 1q0-1 1-1h13v14H0zM16 0h13q1 0 1 1v13H16zM0 16h14v14H1q-1 0-1-1zM16 16h14v13q0 1-1 1H16z"/></svg>
  <div class="ks"><svg width="19" height="19"><use href="#lens2"/></svg><span>Search</span>
    <svg width="48" height="34" viewBox="0 0 48 34"><path d="M1 33c1-9 44-9 46 0z" fill="#e5bb4a"/><path d="M19 21h11v6H19z" fill="#9aa0a8"/><path d="M14 12c-2-6 1-10 4-10 2-3 11-3 13 0 4 0 6 5 4 10l-2 10H16z" fill="#8d5a20"/><path d="M19 3q5-4 11 0l2 6-1 13h-3l-1-9h-5l-1 9h-3l-2-12z" fill="#d09a3e"/><path d="M16 5v15M33 5v15M24.500 4v8" stroke="#c08432" stroke-width="2.500"/><path d="M2 13c9-3 10 10 22 6s12-8 22-6" fill="none" stroke="#ef7d1a" stroke-width="2.500"/><path d="M2 15.500c9-3 10 10 22 6s12-8 21-6" fill="none" stroke="#fff" stroke-width="2.500"/><path d="M3 18c8-3 10 10 21 6s12-8 20-6l1 6" fill="none" stroke="#16883a" stroke-width="2.500"/></svg>
  </div>
  <div class="apps">
    <svg viewBox="0 0 30 29"><path d="M0 8h22v21H0z" fill="#6b6874"/><path d="M8 0h22v20H8z" fill="#f0f0f2"/><path d="M8 8h14v12H8z" fill="#b9b8be"/></svg>
    <svg viewBox="0 0 30 29"><circle cx="24" cy="6" r="3.500" fill="#5b63d0"/><circle cx="17" cy="5" r="4.500" fill="#7b83eb"/><path d="M20 11h10v9c0 5-5 6-8 4z" fill="#4b53bc"/><path d="M9 11h15v11c0 9-15 9-15 0z" fill="#7b83eb"/><rect y="8" width="15" height="15" rx="1.500" fill="#464eb8"/><path d="M3.500 12h8M7.500 12v8" stroke="#fff" stroke-width="2"/></svg>
    <svg viewBox="0 0 30 30"><circle cx="15" cy="15" r="15" fill="url(#edge)"/><path d="M10 16c0-7 10-7 10-2 0 3-3 3-2 5s8 3 11 0c-3 12-19 13-19-3z" fill="#1b1650"/><path d="M1 12C7 5 17 7 19 12c-6-3-12 2-10 9s8 9 12 8C8 33-1 24 1 12z" fill="#1270c2"/></svg>
    <svg viewBox="0 0 30 29"><path d="M0 3q0-2 2-2h8l3 3H0z" fill="#d99a12"/><rect y="4" width="30" height="23" rx="2" fill="#fcc943"/><path d="M5 28v-5q0-3 3-3h14q3 0 3 3v5z" fill="#1173c4"/><path d="M9 24h12" stroke="#0b4f8c" stroke-width="1.500"/></svg>
    <svg viewBox="0 0 30 29"><path d="M9 6V1h13v5" fill="none" stroke="#2ba7f0" stroke-width="2"/><path d="M1 5h28v20q0 4-4 4H5q-4 0-4-4z" fill="#f4f4f6"/><path d="M9 11h5v5H9z" fill="#f25022"/><path d="M15.500 11h5v5h-5z" fill="#7fba00"/><path d="M9 17.500h5v5H9z" fill="#00a4ef"/><path d="M15.500 17.500h5v5h-5z" fill="#ffb900"/></svg>
    <svg viewBox="0 0 30 29"><rect x="1" y="4" width="29" height="21" rx="4" fill="#f00"/><path d="m12 10 8 4.500-8 4.500z" fill="#fff"/></svg>
    <svg viewBox="0 0 30 29"><path d="M9 6h18v22L9 26z" fill="#f4f8f1" stroke="#5c9a50"/><path d="M19 11h8M19 16h8M9 22h18M20 7v20" stroke="#5c9a50"/><path d="M3 2 25 0v6l-3 17L1 23z" fill="#b9d6ae"/><path d="M3 5l17-3-2 20-16 1z" fill="#d9ead3" stroke="#5c9a50"/><path d="m6 7 9 13M16 7 5 20" stroke="#1f6e28" stroke-width="3.200"/><path d="M20 12h8v15h-8zM20 17h8M20 22h8M24 12v15" fill="#f4f8f1" stroke="#5c9a50"/></svg>
    <div class="act"><svg viewBox="0 0 26 30"><path d="M14 0h10q1 0 1 1v28q0 1-1 1H14z" fill="#d09a12"/><path d="M8 8q0-1 1-1h9v23H8z" fill="#efc63a"/><path d="M1 16q0-1 1-1h10v15H2q-1 0-1-1z" fill="url(#gold)"/></svg></div>
  </div>
  <div class="tray">
    <svg width="14" height="9" viewBox="0 0 14 9"><path d="m1 8 6-6.500L13 8" fill="none" stroke="#fff" stroke-width="1.700"/></svg>
    <div class="lang">ENG<br>IN</div>
    <svg class="wf" width="20" height="16" viewBox="0 0 20 16" fill="none" stroke="#fff" stroke-width="1.400"><path d="M1 6c5-6 13-6 18 0M4 9c3.500-4 8.500-4 12 0M7 12c2-2.500 4-2.500 6 0"/><circle cx="10" cy="14" r="1" fill="#fff"/></svg>
    <svg class="sp" width="20" height="18" viewBox="0 0 20 18" fill="none" stroke="#fff" stroke-width="1.400"><path d="M1 6h3l5-4v14l-5-4H1zM12 6q2 3 0 6M14.500 4q3.500 5 0 10M17 2q4 7 0 14"/></svg>
    <svg class="bt" width="20" height="14" viewBox="0 0 20 14"><rect x=".7" y="1" width="16" height="12" rx="2.500" fill="none" stroke="#fff" stroke-width="1.400"/><path d="M3 3.500h4v7H3zM18 5v4q1.500-2 0-4z" fill="#fff" stroke="#fff"/></svg>
    <div class="clock">14:43<br>26-11-2024</div>
    <svg class="bell" width="17" height="20" viewBox="0 0 17 20"><path d="M8.500 1C4 1 2.500 4 2.500 8l-2 7h16l-2-7c0-4-1.500-7-6-7zM6 16.500h5c0 3-5 3-5 0z" fill="#f0b4ee"/></svg>
    <div class="cop"><svg width="29" height="27"><use href="#copilot" width="29" height="25"/></svg><span>PRE</span></div>
  </div>
</div>
</body>
</html>
```
FILE: styles.css
```css
* { box-sizing: border-box; margin: 0; padding: 0; }
body { width: 1920px; height: 1080px; overflow: hidden; display: flex; flex-direction: column; font: 15px/20px "Open Sans", "Noto Sans", sans-serif; letter-spacing: -.025em; color: #252423; background: #f3f2f1; }
svg { display: block; flex: none; overflow: visible; }
.defs { position: absolute; }
.ln { fill: none; stroke: #3b3a39; stroke-width: 1.5; }
.lnk { stroke: #3b3a39; stroke-width: 1.5; }
.light { stroke: #f3f2f1; }
.faded { stroke: #797774; }
.dark { color: #3b3a39; }
.gray { color: #797774; }
em, i { font-style: normal; }

/* title bar */
.titlebar { height: 43px; background: #3b3a37; display: flex; align-items: center; color: #fff; flex: none; }
.tb-left { width: 823px; display: flex; align-items: center; padding-left: 20px; }
.tb-left svg:nth-child(2) { margin-left: 19px; }
.tb-left svg:nth-child(3) { margin-left: 19px; }
.doc { margin: 5px 10px 0 12px; font-size: 15px; letter-spacing: -.019em; }
.tb-search { width: 500px; height: 30px; margin-bottom: 2px; background: #d4d4d2; border-radius: 2px; display: flex; align-items: center; color: #225b52; font-size: 17px; gap: 15px; padding-left: 21px; }
.tb-search span { padding-top: 1px; }
.tb-right { flex: 1; display: flex; align-items: center; }
.signin { width: 48px; margin-left: 330px; white-space: nowrap; font-size: 14.5px; }
.avatar { margin-left: 10px; }
.wb { margin-left: 41px; margin-top: 4px; }
.avatar + .wb { margin-left: 40px; }

/* ribbon */
.ribbon { height: 157px; background: #fafafa; flex: none; box-shadow: 0 1px 6px rgba(0,0,0,.22); position: relative; z-index: 2; }
.tabs { height: 45px; display: flex; font-size: 17px; padding-left: 28px; }
.tabs a { height: 38px; line-height: 39px; white-space: nowrap; }
.t-file { width: 73px; }
.t-home { width: 48px; margin-right: 39px; }
.t-ins { width: 83px; }
.t-mod { width: 114px; letter-spacing: -.018em; }
.t-view { width: 76px; }
.t-opt { width: 109px; }
.tabs .on { font-weight: 600; border-bottom: 3px solid #117865; letter-spacing: -.035em; }
.share { margin: 5px 7px 0 auto; width: 105px; height: 30px; border: 0; border-radius: 4px; background: #117865; color: #fff; font: 600 14.5px "Open Sans", sans-serif; letter-spacing: -.05em; display: flex; align-items: center; padding-left: 9px; }
.share span { width: 42px; margin-left: 10px; text-align: left; }
.groups { display: flex; height: 110px; color: #323130; }
.grp { border-right: 1px solid #c8c6c4; display: flex; flex-direction: column; height: 110px; padding-top: 5px; }
.row { display: flex; flex: 1; }
.grp label { text-align: center; font-size: 12.5px; line-height: 15px; position: relative; top: 1px; }
.btn { display: flex; flex-direction: column; align-items: center; font-size: 14.5px; white-space: nowrap; }
.btn > svg { margin-bottom: 4px; color: #3b3a39; }
.off { color: #c8c6c4; }
.dn { display: inline-block; width: 8px; height: 6px; margin-left: 2px; }
.g-clip { width: 201px; } .g-data { width: 459px; } .g-query { width: 145px; } .g-ins { width: 184px; } .g-calc { width: 233px; } .g-sens { width: 92px; } .g-share { width: 73px; } .g-cop { width: 74px; }
.g-data .row { padding-left: 8px; } .g-query .row { padding-left: 12px; } .g-ins .row { padding-left: 10px; } .g-calc .row { padding-left: 11px; } .g-sens .row { padding-left: 5px; }
.b-paste { width: 70px; }
.b-paste > svg { margin-left: 5px; }
.clip { font-size: 14.8px; color: #c8c6c4; margin-left: -5px; padding-top: 0; }
.clip div { display: flex; align-items: center; gap: 5px; height: 30px; white-space: nowrap; position: relative; top: -6px; }
.w49 { width: 49px; } .w50 { width: 50px; } .w54 { width: 54px; } .w55 { width: 55px; } .w58 { width: 58px; } .w62 { width: 62px; } .w65 { width: 65px; } .w66 { width: 66px; } .w70 { width: 72px; } .w72 { width: 72px; } .w73 { width: 73px; } .w80 { width: 80px; } .w84 { width: 84px; }
.fx { font: italic 22px "Liberation Serif", serif; fill: #a9a7a5; }
.collapse { margin: 96px 6px 0 auto; }

/* work area */
.work { height: 790px; display: flex; flex: none; }
.rail { width: 52px; border-right: 1px solid #e1dfdd; background: #f3f2f1; }
.rail div { height: 50px; display: flex; align-items: center; justify-content: center; border-left: 3px solid transparent; padding: 0 3px 1px 0; }
.rail .sel { border-color: #117865; }
.rl { fill: none; stroke: #797774; stroke-width: 1.4; }
.dax { font: bold 9px "Open Sans", sans-serif; fill: #605e5c; stroke: none; }
.center { width: 1416px; display: grid; grid-template: 746px 44px / 1166px 250px; background: #fff; }
.canvas { border-right: 1px solid #a9a7a5; }
.report { height: 658px; margin: 0 1px 0 1px; padding-left: 5px; border-bottom: 2px dotted #444; display: grid; grid-template-columns: 463px 225px 23px 440px; grid-template-rows: 105px 138px 179px 235px; }
h2, h3, h4 { font-weight: 700; font-style: italic; font-family: "Comic Sans MS", "Comic Neue", Lato, sans-serif; white-space: nowrap; }
h2, h4 { -webkit-text-stroke: .7px currentColor; }
.v-title { grid-area: 1 / 1 / 2 / 3; }
.banner { width: 666px; height: 89px; background: #744ec2; border: 1px solid #1b1230; box-shadow: 6px 7px 10px rgba(0,0,0,.3); text-align: center; font: 700 24px/32px "Open Sans", sans-serif; padding: 5px 2px 0 0; letter-spacing: -.008em; }
.banner .p { color: #4b0060; letter-spacing: -.009em; }
.v-cards { grid-area: 2 / 1 / 3 / 3; display: flex; gap: 2px; margin-left: -1px; }
.card { width: 332px; height: 138px; background: #744ec2; padding: 4px 5px 5px 4px; }
.card + .card { width: 335px; }
.in { height: 100%; background: #fff; border: 1px solid #b3a8c8; padding: 23px 0 0 12px; display: flex; flex-direction: column; }
.in span { font-size: 15px; color: #605e5c; letter-spacing: -.04em; }
.in b { font: italic 700 50px/50px Roboto, sans-serif; color: #118dff; margin-top: 13px; letter-spacing: -1.9px; border-bottom: 5px solid #118dff; height: 47px; width: 148px; padding-left: 1px; line-height: 47px; }
.in b.two { width: 86px; padding-left: 4px; }
.v-bars { grid-area: 3 / 1 / 5 / 2; background: #744ec2; border-top: 1px solid #c7b9e6; }
.v-bars h2 { height: 34px; padding: 5px 0 0 5px; font-size: 25px; line-height: 28px; color: #fff; text-decoration: underline; text-underline-offset: 3px; letter-spacing: 1.1px; word-spacing: 3px; }
.cat text { font: 700 12.5px "Open Sans", sans-serif; fill: #fff; text-anchor: end; letter-spacing: 0; }
.val text { font: 10.8px "Open Sans", sans-serif; fill: #605e5c; letter-spacing: -.3px; }
.mid text, .axt, .xs, .xk { text-anchor: middle; }
.axt { font: 13px "Open Sans", sans-serif; fill: #252423; letter-spacing: 0; }
.v-season { grid-area: 3 / 2 / 4 / 3; background: #744ec2; border: 1px solid #cfc3ea; display: flex; justify-content: space-between; padding: 0 3px 0 12px; overflow: hidden; margin: 1px -1px 0 0; }
.v-season h3 { font: 700 22px/28px Roboto, sans-serif; color: #12239e; text-decoration: underline; padding-top: 3px; letter-spacing: -.2px; text-underline-offset: 3px; }
.v-season ul { list-style: none; }
.v-season li { display: flex; align-items: center; height: 24.4px; gap: 7px; color: #fff; font-weight: 700; font-size: 13.5px; }
.v-season u { text-underline-offset: 2px; letter-spacing: -.03em; }
.v-season i { width: 13px; height: 13px; border: 1px solid #7c6e94; }
.v-season .ck { background: #252423; border-color: #252423; }
.v-season .sb { width: 8px; height: 131px; background: #9480b8; margin-top: 31px; }
.v-crop { grid-area: 4 / 2 / 5 / 4; background: #744ec2; border-top: 1px solid #b9a8de; padding: 4px 0 0 4px; }
.v-crop h2 { font-size: 35px; line-height: 38px; font-style: italic; color: #fff; text-decoration: underline; text-underline-offset: 4px; text-decoration-thickness: 2px; height: 44px; letter-spacing: -.7px; -webkit-text-stroke-width: 1px; }
.tiles { display: grid; grid-template-columns: repeat(3, 75px); grid-auto-rows: 55px; gap: 7px; }
.tiles div { background: #fff; border: 1px solid #c8c6c4; font: 12.8px/53px Roboto, sans-serif; letter-spacing: 0; padding-left: 12px; white-space: nowrap; }
.v-right { grid-area: 1 / 3 / 4 / 5; padding: 3px 0 0 6px; }
.dist { font-size: 25px; line-height: 32px; height: 36px; color: #118dff; text-decoration: underline; text-underline-offset: 3px; letter-spacing: 1.4px; }
.slicer { display: flex; justify-content: space-between; width: 443px; }
.slicer .sb { width: 8px; height: 19px; background: #d2d0ce; margin-top: -1px; }
.slicer svg { margin-right: 5px; }
.din text { font: 700 16.5px Roboto, sans-serif; fill: #000; letter-spacing: 0; }
.don { font-size: 21.5px; line-height: 26px; height: 35px; padding-top: 5px; color: #000; text-decoration: underline; text-underline-offset: 3px; letter-spacing: .8px; word-spacing: 3px; }
.lg text { font: 12px "Open Sans", sans-serif; fill: #605e5c; letter-spacing: 0; }
.lg .pc { font-size: 11px; }
.lg .bd { font-weight: 700; } .lg .kh { font-size: 12.5px; }
.v-area { grid-area: 4 / 4 / 5 / 5; background: #744ec2; border: 1px solid #b9a8de; border-width: 1px 2px; }
.v-area h4 { font-size: 17px; line-height: 22px; height: 27px; padding-left: 2px; padding-top: 2px; color: #fff; letter-spacing: .7px; word-spacing: 3px; -webkit-text-stroke-width: .5px; }
.yl text { font: 700 11.5px "Open Sans", sans-serif; fill: #fff; text-anchor: end; letter-spacing: 0; }
.xk { font: 11.5px "Open Sans", sans-serif; fill: #fff; letter-spacing: 0; }
.xs { font: 9.5px "Open Sans", sans-serif; fill: #252423; letter-spacing: 0; }

/* filters */
.filters { background: #fff; padding: 14px 10px 0; }
.fh { display: flex; align-items: center; height: 22px; padding-left: 5px; }
.fh b, .ph b { font-size: 18px; font-weight: 600; letter-spacing: -.03em; }
.ph .vh { letter-spacing: -.04em; }
.fh b { width: 139px; margin-left: 10px; }
.fh .eye { margin-right: 22px; margin-top: -2px; }
.fh .up { margin-top: -2px; }
.fs { margin-top: 21px; width: 225px; height: 38px; border: 1px solid #a19f9d; border-radius: 2px; display: flex; align-items: center; gap: 17px; padding-left: 13px; }
.fsec { margin: 5px -10px 0; border-top: 1px solid #a9a7a5; padding: 22px 10px 0; }
.fsec.two { border: 0; margin-top: 0; padding-top: 34px; }
.fl { display: flex; justify-content: space-between; width: 225px; height: 30px; font-size: 14.5px; letter-spacing: -.02em; margin-top: -1px; }
.fl em { letter-spacing: 1px; font-size: 15px; margin-top: 1px; }
.fbox { width: 230px; height: 58px; border: 1px solid #c8c6c4; border-radius: 2px; text-align: center; line-height: 57px; font-size: 14.5px; margin-top: 1px; padding-right: 3px; }

/* page tabs */
.pages { grid-column: 1 / 3; background: #f3f2f1; display: flex; height: 44px; }
.dev { width: 30px; margin-left: 12px; padding: 8px 0 0 1px; height: 39px; border-bottom: 3px solid #117865; }
.mob { margin: 5px 0 0 31px; }
.arr { display: flex; gap: 22px; margin: 17px 8px 0 26px; }
.pg { background: #fff; width: 96px; line-height: 45px; text-align: center; border-left: 1px solid #a9a7a5; font-size: 15px; }
.pg.on { width: 95px; border-bottom: 4px solid #117865; font-size: 14.8px; color: #111; }
.plus { width: 49px; background: #117865; display: flex; align-items: center; justify-content: center; padding-bottom: 3px; }

/* visualizations */
.viz { width: 226px; border-left: 1px solid #d8d6d4; }
.ph { display: flex; justify-content: space-between; align-items: center; height: 22px; margin: 14px 10px 0; }
.bv { margin: 12px 0 0 10px; font-weight: 600; font-size: 14.2px; letter-spacing: -.035em; }
.modes { display: flex; margin: 4px 0 0 10px; }
.modes .ln { margin: 5px 0 0 48px; }
.m1 { width: 40px; height: 40px; background: #c8c6c4; padding: 5px; }
.notch { margin: 6px 0 0; }
.vg { display: grid; grid-template-columns: repeat(6, 23px); grid-auto-rows: 23px; gap: 12px; margin: 14px 0 0 14px; }
.vg svg { width: 23px; height: 23px; }
.k { fill: none; stroke: #3b3a39; stroke-width: 1.4; }
.b { fill: #83beec; stroke: #0063b1; stroke-width: 1.2; }
.g { fill: #c8c6c4; stroke: #797774; stroke-width: 1.2; }
.w { fill: #fff; stroke: #3b3a39; stroke-width: 1.2; }
.k2 { stroke-width: 1.4; }
.g2 { stroke: #797774; stroke-width: 1.3; }
.vt { font: 11px "Open Sans", sans-serif; fill: #1e87cf; letter-spacing: 0; }
.big { font: 700 20px "Open Sans", sans-serif; fill: #1e87cf; letter-spacing: 0; }
.more { margin: 8px 0 0 15px; letter-spacing: 3px; font-size: 18px; height: 38px; line-height: 14px; font-weight: 600; }
.wells { border-top: 1px solid #e1dfdd; padding: 11px 7px 0 5px; }
.wl { padding-left: 10px; font-size: 14.5px; }
.wb1 { border: 1px dashed #c8c6c4; background: #fff; border-radius: 2px; height: 35px; line-height: 34px; margin-top: 6px; padding-left: 12px; font-size: 14.8px; width: 213px; }
.dt { margin-top: 14px; font-weight: 600; color: #484644; font-size: 14px; }
.tg { display: flex; justify-content: space-between; align-items: center; height: 20px; margin: 11px 20px 0 10px; font-size: 14.5px; letter-spacing: -.015em; }
.tg + .tg { margin-top: 14px; }
.sw { width: 40px; height: 20px; border: 1px solid #797774; border-radius: 10px; background: #fff; display: flex; align-items: center; font-size: 11px; gap: 2px; padding-left: 5px; color: #605e5c; }
.sw i { width: 10px; height: 10px; border-radius: 5px; background: #605e5c; }
.sw.on { background: #117865; border-color: #117865; color: #fff; gap: 4px; }
.sw.on i { background: #fff; }
.wb2 { border: 1px dashed #c8c6c4; background: #fff; border-radius: 2px; height: 32px; line-height: 31px; margin-top: 13px; padding-left: 10px; font-size: 14.9px; width: 213px; white-space: nowrap; letter-spacing: -.015em; }

/* data pane */
.data { width: 226px; border-left: 1px solid #e1dfdd; }
.ds { margin: 21px 5px 0 5px; height: 30px; background: #fff; border: 1px solid #d2d0ce; border-bottom: 1px solid #605e5c; border-radius: 4px; display: flex; align-items: center; gap: 9px; padding-left: 14px; color: #605e5c; font-size: 16.4px; }
.ds span { padding-top: 2px; }
.dr { display: flex; align-items: center; margin: 16px 0 0 19px; color: #484644; font-size: 14.7px; white-space: nowrap; letter-spacing: -.012em; }
.dr .ln { margin: 0 6px 0 9px; }

/* status bar */
.status { height: 29px; border-top: 1px solid #dcdad8; display: flex; justify-content: space-between; align-items: center; color: #484644; flex: none; }
.pgn { padding: 1px 0 0 5px; letter-spacing: -.02em; }
.zoom { display: flex; align-items: center; color: #605e5c; font-weight: 600; margin-right: 23px; }
.zoom > span { position: relative; left: -1px; top: -1px; font-weight: 700; }
.zoom > svg:nth-child(2) { margin: 2px 7px 0 4px; }
.zoom em { font-weight: 400; margin: 0 23px 0 16px; width: 29px; font-size: 14.5px; }

/* taskbar */
.taskbar { flex: 1; border-top: 2px solid #050505; display: flex; align-items: center; color: #fff; background: linear-gradient(90deg, #1b2120 0, #1c2323 470px, #122829 600px, #14293f 690px, #14265a 790px, #2b214b 920px, #24164f 1050px, #2a1170 1170px, #2c1166 1260px, #311053 1370px, #301355 1620px, #221a34 1920px); }
.k1 { margin-left: 26px; }
.k2w { margin-left: 528px; }
.ks { width: 275px; height: 40px; margin-left: 17px; border: 1px solid rgba(255,255,255,.18); border-radius: 20px; background: linear-gradient(90deg, rgba(255,255,255,.14), rgba(255,255,255,.17)); display: flex; align-items: center; padding-left: 14px; color: #e6e8ea; font-size: 16.4px; }
.ks span { width: 170px; margin-left: 11px; }
.apps { display: flex; align-items: center; margin-left: 15px; width: 440px; }
.apps > svg { width: 30px; height: 29px; margin-right: 25px; }
.act { width: 50px; height: 50px; border-radius: 5px; background: rgba(255,255,255,.09); margin-left: -11px; display: flex; flex-direction: column; align-items: center; padding-top: 10px; border: 1px solid rgba(255,255,255,.05); flex: none; }
.act svg { width: 26px; height: 30px; }
.act::after { content: ""; width: 20px; height: 3px; border-radius: 2px; background: #e2a3e4; margin-top: 5px; }
.tray { display: flex; align-items: center; margin-left: auto; width: 374px; font-size: 14.5px; flex: none; }
.lang { width: 40px; text-align: center; margin-left: 21px; }
.wf { margin-left: 17px; } .sp { margin-left: 10px; } .bt { margin-left: 10px; }
.clock { width: 98px; text-align: right; letter-spacing: 0; white-space: nowrap; font-size: 14.3px; }
.bell { margin-left: 10px; }
.cop { margin-left: 23px; display: grid; }
.cop > * { grid-area: 1 / 1; }
.cop span { align-self: end; justify-self: center; margin: 0 0 -3px 6px; background: #ffc60a; color: #1a1a1a; font-size: 9px; line-height: 9px; font-weight: 700; border-radius: 2px; padding: 0 3px; letter-spacing: .2px; }
```
